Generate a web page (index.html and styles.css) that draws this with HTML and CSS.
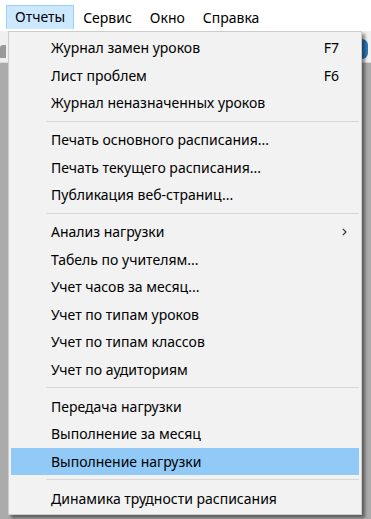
FILE: index.html
```html
<!DOCTYPE html>
<html lang="ru">
  <head>
    <meta charset="UTF-8" />
    <title>Отчеты</title>
    <link rel="stylesheet" href="styles.css">
  </head>
  <body>
    <nav class="menuBar">
      <a class="active" href="#">Отчеты</a>
      <a href="#">Сервис</a>
      <a href="#">Окно</a>
      <a href="#">Справка</a>
    </nav>
    <div class="toolbar">
      <span class="tool tool-left"></span>
      <span class="tool tool-right"></span>
    </div>
    <div class="workspace"></div>

    <!-- dropdown of "Отчеты" -->
    <ul class="dropdown">
      <li class="item"><span>Журнал замен уроков</span><span class="key">F7</span></li>
      <li class="item"><span>Лист проблем</span><span class="key">F6</span></li>
      <li class="item"><span>Журнал неназначенных уроков</span></li>
      <li class="sep"></li>
      <li class="item"><span>Печать основного расписания...</span></li>
      <li class="item"><span>Печать текущего расписания...</span></li>
      <li class="item"><span>Публикация веб-страниц...</span></li>
      <li class="sep"></li>
      <li class="item"><span>Анализ нагрузки</span>
        <svg class="arrow" width="5" height="8" viewBox="0 0 5 8"><path d="M0.8 0.8 L4 4 L0.8 7.2" fill="none" stroke="#333" stroke-width="1.2"/></svg>
      </li>
      <li class="item"><span>Табель по учителям...</span></li>
      <li class="item"><span>Учет часов за месяц...</span></li>
      <li class="item"><span>Учет по типам уроков</span></li>
      <li class="item"><span>Учет по типам классов</span></li>
      <li class="item"><span>Учет по аудиториям</span></li>
      <li class="sep"></li>
      <li class="item"><span>Передача нагрузки</span></li>
      <li class="item"><span>Выполнение за месяц</span></li>
      <li class="item hover"><span>Выполнение нагрузки</span></li>
      <li class="sep"></li>
      <li class="item"><span>Динамика трудности расписания</span></li>
    </ul>
  </body>
</html>
```

FILE: styles.css
```css
html, body {
  margin: 0;
  padding: 0;
  height: 100%;
}

body {
  font-family: "Noto Sans", "Open Sans", sans-serif;
  font-size: 14px;
  color: #000;
  background: #ababab;
  overflow: hidden;
  position: relative;
}

.menuBar {
  display: flex;
  height: 31px;
  align-items: center;
  background: #fff;
  padding-left: 6px;
}

.menuBar a {
  color: #000;
  text-decoration: none;
  padding: 0 8px;
  height: 23px;
  line-height: 22px;
  margin-top: 5px;
  margin-bottom: 2px;
  border: 1px solid transparent;
  box-sizing: border-box;
}

.menuBar a.active {
  background: #cce8ff;
  border-color: #99d1ff;
  border-bottom: 0;
  height: 24px;
}

.toolbar {
  height: 31px;
  background: #f0f0f0;
  border-bottom: 1px solid #d8d8d8;
  position: relative;
}

.tool {
  position: absolute;
  display: block;
}

.tool-left {
  left: 0;
  top: 14px;
  width: 6px;
  height: 13px;
  background: #9a9a9a;
  border-radius: 3px 0 0 0;
}

.tool-right {
  right: 3px;
  top: 8px;
  width: 6px;
  height: 20px;
  background: #2d7bbd;
  border-radius: 0 10px 10px 0;
}

.dropdown {
  position: absolute;
  left: 8px;
  top: 31px;
  width: 354px;
  box-sizing: border-box;
  margin: 0;
  padding: 2px 2px;
  list-style: none;
  background: #f2f2f2;
  border: 1px solid #cccccc;
  box-shadow: 3px 3px 3px rgba(0, 0, 0, 0.45);
}

.item {
  display: flex;
  align-items: center;
  height: 27.5px;
  padding-left: 40px;
  padding-right: 12px;
  position: relative;
}

.item .key {
  margin-left: auto;
  padding-right: 8px;
}

.item .arrow {
  margin-left: auto;
}

.item.hover {
  background: #91c9f7;
}

.sep {
  height: 9.5px;
  display: flex;
  align-items: center;
  padding-left: 35px;
}

.sep::after {
  content: "";
  display: block;
  flex: 1;
  height: 1px;
  background: #d7d7d7;
}
```
